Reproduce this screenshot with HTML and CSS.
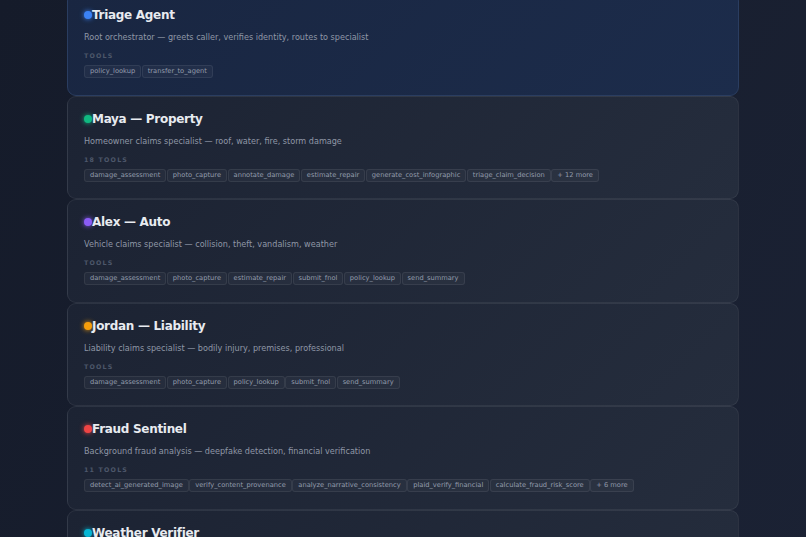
FILE: index.html
```html
<!DOCTYPE html>
<html lang="en">
<head>
<meta charset="utf-8">
<title>Agents</title>
<link rel="stylesheet" href="styles.css">
</head>
<body>
<main class="list">
  <section class="card card-active">
    <h2 class="title"><span class="dot dot-blue"></span>Triage Agent</h2>
    <p class="desc">Root orchestrator — greets caller, verifies identity, routes to specialist</p>
    <div class="label">Tools</div>
    <div class="tags"><span class="tag">policy_lookup</span><span class="tag">transfer_to_agent</span></div>
  </section>
  <section class="card">
    <h2 class="title"><span class="dot dot-green"></span>Maya — Property</h2>
    <p class="desc">Homeowner claims specialist — roof, water, fire, storm damage</p>
    <div class="label">18 Tools</div>
    <div class="tags"><span class="tag">damage_assessment</span><span class="tag">photo_capture</span><span class="tag">annotate_damage</span><span class="tag">estimate_repair</span><span class="tag">generate_cost_infographic</span><span class="tag">triage_claim_decision</span><span class="tag">+ 12 more</span></div>
  </section>
  <section class="card">
    <h2 class="title"><span class="dot dot-purple"></span>Alex — Auto</h2>
    <p class="desc">Vehicle claims specialist — collision, theft, vandalism, weather</p>
    <div class="label">Tools</div>
    <div class="tags"><span class="tag">damage_assessment</span><span class="tag">photo_capture</span><span class="tag">estimate_repair</span><span class="tag">submit_fnol</span><span class="tag">policy_lookup</span><span class="tag">send_summary</span></div>
  </section>
  <section class="card">
    <h2 class="title"><span class="dot dot-amber"></span>Jordan — Liability</h2>
    <p class="desc">Liability claims specialist — bodily injury, premises, professional</p>
    <div class="label">Tools</div>
    <div class="tags"><span class="tag">damage_assessment</span><span class="tag">photo_capture</span><span class="tag">policy_lookup</span><span class="tag">submit_fnol</span><span class="tag">send_summary</span></div>
  </section>
  <section class="card">
    <h2 class="title"><span class="dot dot-red"></span>Fraud Sentinel</h2>
    <p class="desc">Background fraud analysis — deepfake detection, financial verification</p>
    <div class="label">11 Tools</div>
    <div class="tags"><span class="tag">detect_ai_generated_image</span><span class="tag">verify_content_provenance</span><span class="tag">analyze_narrative_consistency</span><span class="tag">plaid_verify_financial</span><span class="tag">calculate_fraud_risk_score</span><span class="tag">+ 6 more</span></div>
  </section>
  <section class="card">
    <h2 class="title"><span class="dot dot-cyan"></span>Weather Verifier</h2>
    <p class="desc">Weather event verification — storm reports, hail, wind data</p>
    <div class="label">Tools</div>
    <div class="tags"><span class="tag">weather_lookup</span></div>
  </section>
</main>
</body>
</html>
```
FILE: styles.css
```css
* { box-sizing: border-box; }
html, body { margin: 0; padding: 0; }
body {
  background: linear-gradient(120deg, #151b2a 0%, #1b2234 100%);
  min-height: 537px;
  overflow: hidden;
  font-family: "DejaVu Sans", "Liberation Sans", sans-serif;
}
.list {
  width: 672px;
  margin: -8px auto 0;
  display: flex;
  flex-direction: column;
  gap: 0;
}
.card {
  border: 1px solid rgba(255, 255, 255, 0.07);
  border-radius: 9px;
  background: linear-gradient(135deg, #1c2333 0%, #252d3d 100%);
  padding: 15px 16px 16.5px;
}
.card-active {
  background: linear-gradient(135deg, #192641 0%, #1c2c4b 100%);
  border-color: #2a3d60;
}
.title {
  margin: 0;
  display: flex;
  align-items: center;
  font-size: 12px;
  line-height: 14px;
  font-weight: 700;
  letter-spacing: -0.3px;
  color: #e8ebf0;
}
.dot {
  width: 8px;
  height: 8px;
  border-radius: 50%;
  flex: none;
}
.dot-blue { background: #3b82f6; box-shadow: 0 0 5px #3b82f6; }
.dot-green { background: #10b981; box-shadow: 0 0 5px #10b981; }
.dot-purple { background: #8b5cf6; box-shadow: 0 0 5px #8b5cf6; }
.dot-amber { background: #f59e0b; box-shadow: 0 0 5px #f59e0b; }
.dot-red { background: #ef4444; box-shadow: 0 0 5px #ef4444; }
.dot-cyan { background: #06b6d4; box-shadow: 0 0 5px #06b6d4; }
.desc {
  margin: 9px 0 0;
  font-size: 8.1px;
  line-height: 12px;
  color: #8f97a6;
}
.label {
  margin-top: 9px;
  font-size: 6.3px;
  line-height: 8px;
  font-weight: 700;
  letter-spacing: 1.2px;
  text-transform: uppercase;
  color: #4d576a;
}
.tags {
  margin-top: 5px;
  display: flex;
  flex-wrap: wrap;
  gap: 0.5px;
}
.tag {
  height: 13px;
  line-height: 11px;
  padding: 0 5px;
  font-size: 6.7px;
  color: #939cac;
  background: rgba(255, 255, 255, 0.035);
  border: 1px solid rgba(255, 255, 255, 0.07);
  border-radius: 3px;
  white-space: nowrap;
}
```
